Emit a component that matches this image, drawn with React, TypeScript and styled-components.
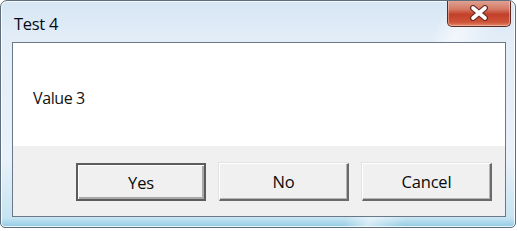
import styled, { createGlobalStyle } from 'styled-components';

const GlobalStyle = createGlobalStyle`
    html, body {
        margin: 0;
        padding: 0;
        background: #ffffff;
    }
    body {
        font-family: "Open Sans", "Liberation Sans", sans-serif;
    }
`

const Window = styled.div`
    box-sizing: border-box;
    width: 516px;
    height: 228px;
    padding: 0 9px 10px 11px;
    display: flex;
    flex-direction: column;
    border: 1px solid #5f6e7c;
    border-radius: 7px 7px 5px 5px;
    background:
        linear-gradient(115deg, rgba(255,255,255,0) 0%, rgba(255,255,255,0) 72%, rgba(255,255,255,0.55) 76%, rgba(255,255,255,0) 82%),
        linear-gradient(180deg, #d7e6f4 0%, #e4eef8 20%, #e9f1f9 70%, #c6e4f2 96%, #8fcbe4 100%);
    box-shadow: inset 0 0 0 1px rgba(255,255,255,0.8);
    overflow: hidden;
`

const TitleBar = styled.div`
    height: 41px;
    display: flex;
    justify-content: space-between;
    align-items: flex-start;
`

const Title = styled.span`
    margin-top: 11px;
    margin-left: 2px;
    font-size: 16.5px;
    color: #050a18;
    letter-spacing: -0.3px;
`

const CloseButton = styled.div`
    width: 64px;
    height: 27px;
    margin-top: -1px;
    margin-right: -5px;
    box-sizing: border-box;
    border: 1px solid #5e2b24;
    border-top: none;
    border-radius: 0 0 5px 5px;
    background: linear-gradient(180deg, #e0a598 0%, #d57a66 35%, #c2402a 55%, #cf5438 85%, #e08a6c 100%);
    box-shadow: inset 0 0 0 1px rgba(255,220,210,0.45);
    display: flex;
    align-items: center;
    justify-content: center;
`

const Client = styled.div`
    flex: 1;
    display: flex;
    flex-direction: column;
    border: 1px solid #6b7887;
`

const Message = styled.div`
    height: 103px;
    box-sizing: border-box;
    background: #ffffff;
    padding: 44px 0 0 20px;
    font-size: 16px;
    color: #111111;
    letter-spacing: -0.4px;
`

const ButtonRow = styled.div`
    flex: 1;
    background: #f0f0f0;
    display: flex;
    justify-content: flex-end;
    align-items: flex-start;
    gap: 13px;
    padding: 17px 13px 0 0;
`

const Button = styled.div<{ $default?: boolean }>`
    box-sizing: border-box;
    width: 130px;
    height: 38px;
    display: flex;
    align-items: center;
    justify-content: center;
    font-size: 16.5px;
    color: #0a0a0a;
    background: #f0f0f0;
    letter-spacing: -0.2px;
    border-style: solid;
    ${(p) => p.$default
        ? `border-width: 2px;
           border-color: #5c5c5c;
           box-shadow: inset 1px 1px 0 #ffffff, inset -2px -2px 0 #a8a8a8;`
        : `border-width: 1px 2px 2px 1px;
           border-color: #ffffff #6a6a6a #6a6a6a #ffffff;
           box-shadow: inset -1px -1px 0 #b5b5b5, -1px -1px 0 #e2e2e2;`}
`

export default function App() {
    return (
        <>
            <GlobalStyle />
            <Window>
                <TitleBar>
                    <Title>Test 4</Title>
                    <CloseButton>
                        <svg width="24" height="16" viewBox="0 0 24 16">
                            <path d="M6 3 L18 13 M18 3 L6 13" stroke="#6b2a22" strokeWidth="6" strokeLinecap="round" fill="none" />
                            <path d="M6 3 L18 13 M18 3 L6 13" stroke="#ffffff" strokeWidth="3.6" strokeLinecap="round" fill="none" />
                        </svg>
                    </CloseButton>
                </TitleBar>
                <Client>
                    <Message>Value 3</Message>
                    <ButtonRow>
                        <Button $default>Yes</Button>
                        <Button>No</Button>
                        <Button>Cancel</Button>
                    </ButtonRow>
                </Client>
            </Window>
        </>
    );
}
